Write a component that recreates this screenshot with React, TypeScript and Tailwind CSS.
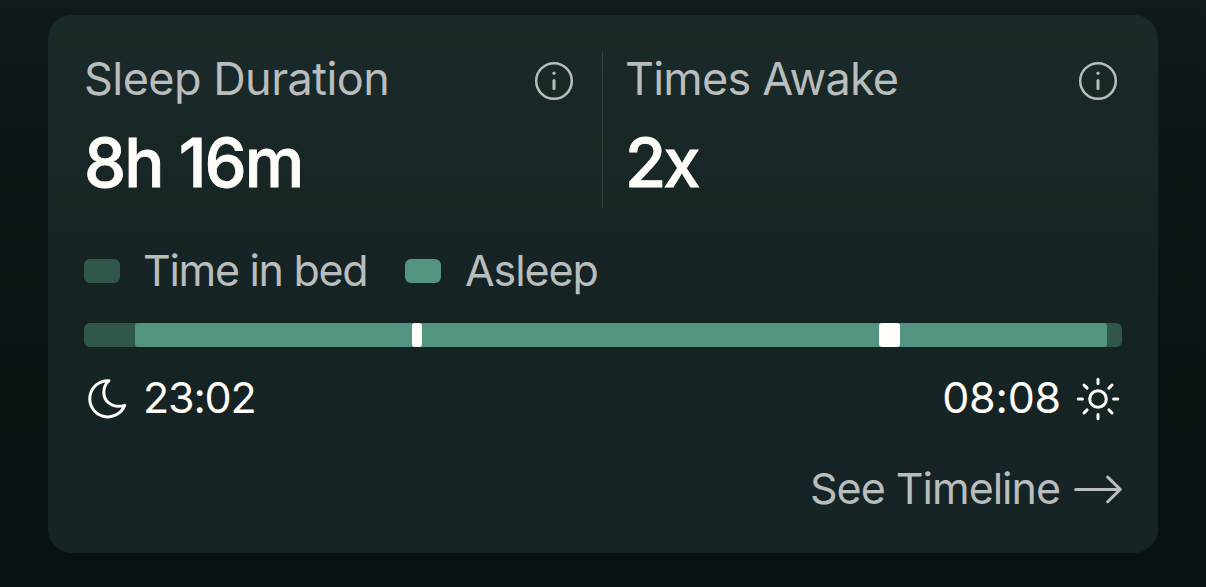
import type { ReactNode } from 'react';

const InfoIcon = () => (
    <svg className="size-12 shrink-0" viewBox="0 0 48 48" fill="none">
        <circle cx="24" cy="24" r="17.8" stroke="currentColor" strokeWidth="2.5" />
        <circle cx="24" cy="16.2" r="1.6" fill="currentColor" />
        <path
            d="M24 23.4v8.2"
            stroke="currentColor"
            strokeWidth="3"
            strokeLinecap="round"
        />
    </svg>
);

const MoonIcon = () => (
    <svg className="size-12 shrink-0" viewBox="0 0 48 48" fill="none">
        <path
            d="M40.7 30.4A18.1 18.1 0 1 1 25 5.7C18.2 11.5 18.2 22.5 24.5 27.6C29 31.5 35 32 40.7 30.4Z"
            stroke="currentColor"
            strokeWidth="3"
            strokeLinejoin="round"
        />
    </svg>
);

const SunIcon = () => (
    <svg className="size-12 shrink-0" viewBox="0 0 48 48" fill="none">
        <g stroke="currentColor" strokeWidth="3" strokeLinecap="round">
            <circle cx="24" cy="24" r="8.3" />
            <path d="M24 4.2v4.2M24 39.6v4.2M4.2 24h4.2M39.6 24h4.2M10 10l3.1 3.1M34.9 34.9l3.1 3.1M10 38l3.1-3.1M34.9 13.1l3.1-3.1" />
        </g>
    </svg>
);

const ArrowIcon = () => (
    <svg className="size-12 shrink-0" viewBox="0 0 48 48" fill="none">
        <path
            d="M1.6 24.4h44.6M33.7 12.1l12.5 12.3l-12.5 12.3"
            stroke="currentColor"
            strokeWidth="3"
            strokeLinecap="round"
            strokeLinejoin="round"
        />
    </svg>
);

type StatProps = { label: ReactNode; value: ReactNode };
const Stat = ({ label, value }: StatProps) => (
    <div className="pt-1.5">
        <div className="flex h-12 items-center justify-between text-[45px] leading-12">
            {label}
            <InfoIcon />
        </div>
        <div className="mt-[22px] text-[67px] leading-[72px] font-medium text-[#fffdf8] [-webkit-text-stroke:0.8px_#fffdf8]">
            {value}
        </div>
    </div>
);

const App = () => {
    return (
        <div className="h-screen overflow-hidden bg-linear-to-b from-[#10191b] via-[#0a1214] to-[#081113] px-12 pt-[15px] font-['Inter',sans-serif] text-[#b9bdbd]">
            <div className="h-[538px] rounded-3xl bg-linear-to-b from-[#1a2a29] via-[#162324] to-[#172425] p-9">
                <div className="flex h-[157px]">
                    <div className="w-[519px] border-r border-[#39413f] pr-6">
                        <Stat
                            label={<span className="-mt-1 tracking-[-0.55px]">Sleep Duration</span>}
                            value={<span className="tracking-[-1.9px]">8h 16m</span>}
                        />
                    </div>
                    <div className="flex-1 pl-6">
                        <Stat
                            label={<span className="-mt-1 -ml-0.5 tracking-[-0.8px]">Times Awake</span>}
                            value={<span className="-ml-0.5 tracking-[-3px]">2x</span>}
                        />
                    </div>
                </div>

                <div className="mt-[39px] flex h-12 items-center text-[43px] leading-12">
                    <span className="h-6 w-9 rounded-md bg-[#31574d]" />
                    <span className="-mt-0.5 ml-[23px] w-[262px] tracking-[-1.3px]">Time in bed</span>
                    <span className="h-6 w-9 rounded-md bg-[#529480]" />
                    <span className="-mt-0.5 ml-6 tracking-[-1.1px]">Asleep</span>
                </div>

                <div className="mt-7 h-6 rounded-md bg-[#31574d] pr-[15px] pl-[51px]">
                    <div className="flex h-full rounded-[3px] bg-[#529480]">
                        <span className="ml-[277px] w-2.5 rounded-[3px] bg-[#fffdf8]" />
                        <span className="ml-[457px] w-[21px] rounded-[3px] bg-[#fffdf8]" />
                    </div>
                </div>

                <div className="mt-7 flex h-12 justify-between text-[43px] leading-12 text-[#fffdf8]">
                    <div className="flex items-center gap-[11px]">
                        <MoonIcon />
                        <span className="-mt-1 tracking-[-1.2px]">23:02</span>
                    </div>
                    <div className="flex items-center gap-[13px]">
                        <span className="-mt-1 tracking-[-0.2px]">08:08</span>
                        <SunIcon />
                    </div>
                </div>

                <div className="mt-[42px] flex h-12 items-center justify-end gap-3.5 text-[43px] leading-12">
                    <span className="-mt-0.5 tracking-[-1px]">See Timeline</span>
                    <ArrowIcon />
                </div>
            </div>
        </div>
    );
};

export default App;
